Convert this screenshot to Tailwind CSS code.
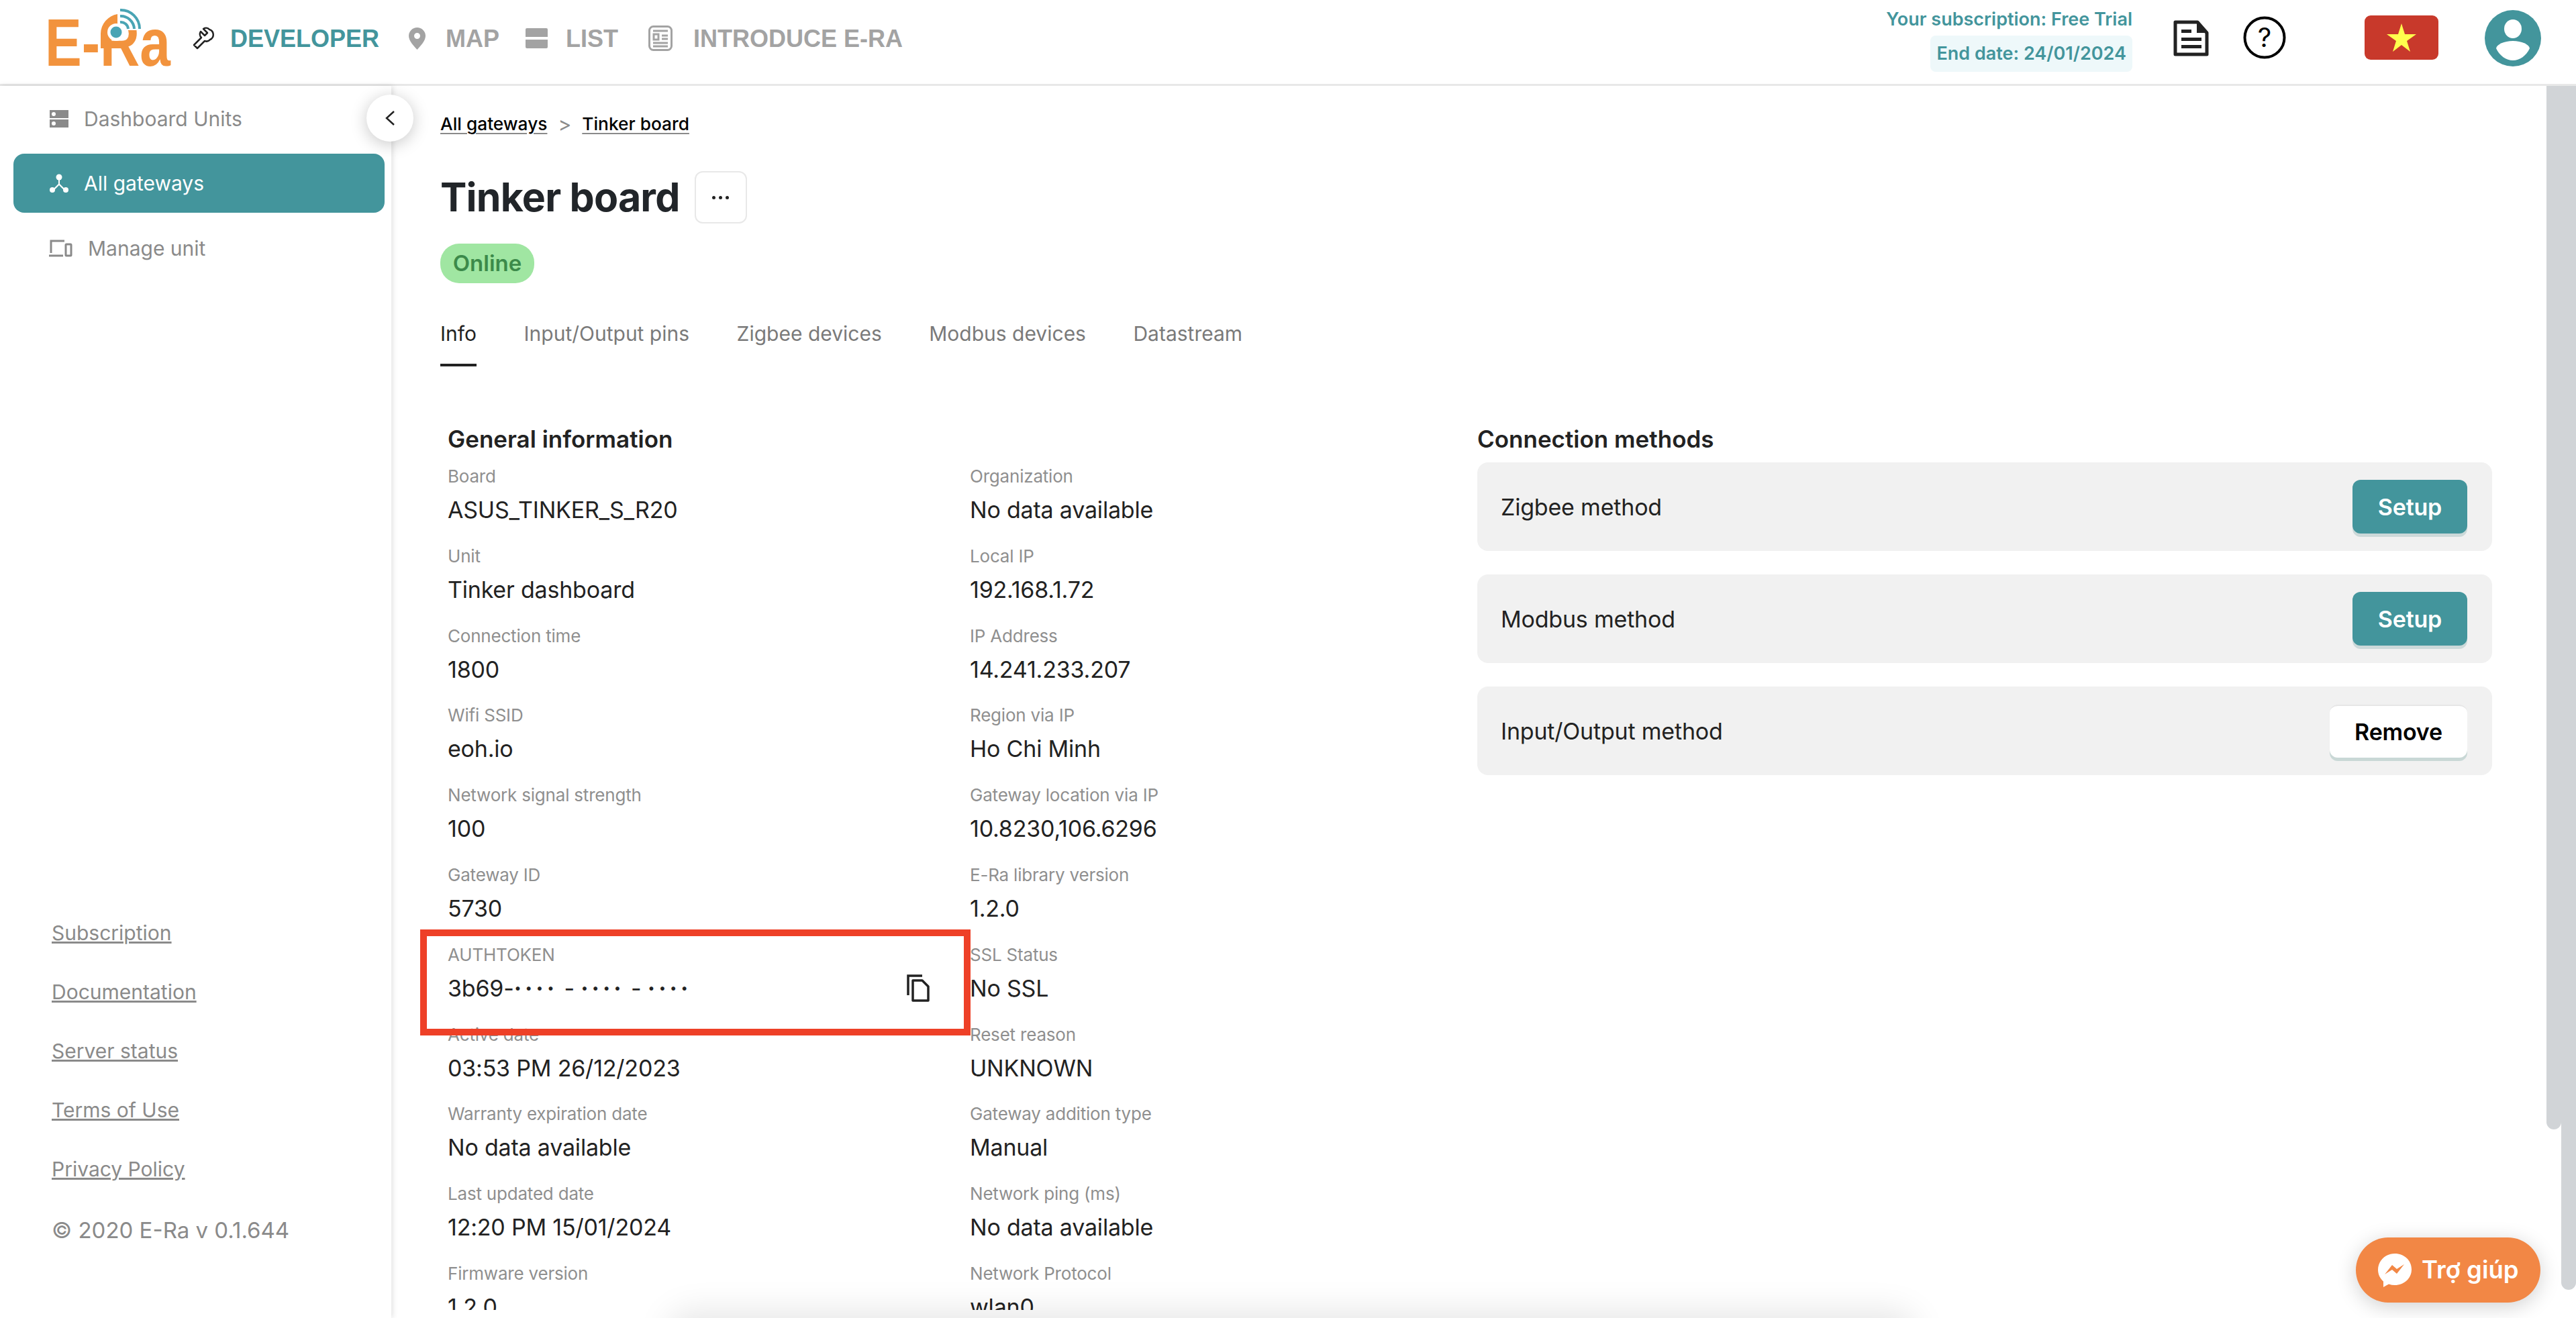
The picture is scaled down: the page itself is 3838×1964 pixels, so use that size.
<!DOCTYPE html>
<html lang="en">
<head>
  <meta charset="UTF-8">
  <title>E-Ra Tinker board</title>
  <script src="https://cdn.jsdelivr.net/npm/@tailwindcss/browser@4"></script>
</head>
<body class="w-[3838px] h-[1964px] overflow-hidden bg-white relative flex flex-col font-['Inter',sans-serif] text-[#222]">

  <!-- top bar -->
  <header class="h-[128px] shrink-0 border-b-[3px] border-[#e8e8e8] flex items-start">
    <svg class="w-[340px] h-[125px] shrink-0" viewBox="0 0 340 125">
      <text x="67" y="98" font-family="Liberation Sans" font-weight="700" font-size="100" fill="#f2933d" textLength="187" lengthAdjust="spacingAndGlyphs">E-Ra</text>
      <rect x="146" y="10" width="32" height="40" fill="#fff"/>
      <rect x="176" y="8" width="40" height="37" fill="#fff"/>
      <path d="M150 72V50A30 30 0 0 1 175 21V40H165V72Z" fill="#f2933d"/>
      <circle cx="173" cy="48" r="13" fill="#fff"/>
      <circle cx="173" cy="48" r="8.500" fill="#49a4b4"/>
      <g fill="none" stroke="#49a4b4" stroke-width="4">
        <path d="M179 15A28 28 0 0 1 208 43"/>
        <path d="M179 24A20 20 0 0 1 200 43"/>
        <path d="M179 33A11 11 0 0 1 191 43"/>
      </g>
      <path d="M314 46a7 7 0 0 0-9-1l6 6-4 4-6-6a7 7 0 0 0 1 9l-11 11 5 5 11-11a7 7 0 0 0 8-2 8 8 0 0 0-1-15z" transform="translate(-2 -2)" fill="none" stroke="#222" stroke-width="2.500" stroke-linejoin="round"/>
    </svg>
    <nav class="flex items-center h-[116px] font-['Liberation_Sans',sans-serif] font-bold text-[36px] text-[#a3a3a3]">
      <span class="text-[#43959c] ml-[3px]">DEVELOPER</span>
      <svg class="w-[25px] h-[33px] ml-[44px] mb-[2px]" viewBox="0 0 25 33"><path fill-rule="evenodd" d="M12.500 0A12.500 12.500 0 0 0 0 12.500C0 20 8 28 12.500 33 17 28 25 20 25 12.500A12.500 12.500 0 0 0 12.500 0ZM12.500 8a4.500 4.500 0 1 1 0 9 4.500 4.500 0 0 1 0-9Z" fill="#a3a3a3"/></svg>
      <span class="ml-[30px]">MAP</span>
      <span class="ml-[39px] w-[33px] h-[30px] flex flex-col justify-between mb-[3px]"><i class="block h-[13px] bg-[#a3a3a3] rounded-t-[2px]"></i><i class="block h-[13px] bg-[#a3a3a3] rounded-b-[2px]"></i></span>
      <span class="ml-[27px]">LIST</span>
      <svg class="w-[36px] h-[38px] ml-[45px] mb-[3px]" viewBox="0 0 36 38" fill="none" stroke="#a3a3a3" stroke-width="3"><rect x="1.500" y="1.500" width="33" height="35" rx="6"/><path d="M7 8h22M20 15h9M20 20h9M7 26h22M7 31h22"/><rect x="8" y="13" width="7" height="8"/></svg>
      <span class="ml-[31px]">INTRODUCE E-RA</span>
    </nav>
    <div class="ml-auto flex items-start">
      <div class="flex flex-col items-end w-[380px] text-[#43959c] font-semibold text-[27px] mr-[61px]">
        <span class="mt-[12px] leading-[34px]">Your subscription: Free Trial</span>
        <span class="mt-[7px] h-[54px] px-[9px] flex items-center rounded-[8px] bg-[#eef8fa]">End date: 24/01/2024</span>
      </div>
      <svg class="w-[53px] h-[54px] mt-[30px]" viewBox="0 0 53 54" fill="none"><path d="M3 3H36L50 19V51H3Z" stroke="#222" stroke-width="5" stroke-linejoin="round"/><path d="M35 3V19H50Z" fill="#222"/><path d="M12 14h15v5H12zM12 26h30v5H12zM12 37h30v5H12z" fill="#222"/></svg>
      <svg class="w-[64px] h-[64px] mt-[24px] ml-[51px]" viewBox="0 0 64 64"><circle cx="32" cy="32" r="29.500" fill="none" stroke="#000" stroke-width="4"/><text x="32" y="46" font-family="Inter" font-size="40" text-anchor="middle" fill="#000">?</text></svg>
      <div class="w-[110px] h-[66px] mt-[23px] ml-[117px] rounded-[9px] bg-[#c8392b] flex items-center justify-center">
        <svg class="w-[44px] h-[42px]" viewBox="0 0 44 42"><path d="M22 0L27 16H44L30 26 35 42 22 32 9 42 14 26 0 16H17Z" fill="#ffff4d"/></svg>
      </div>
      <svg class="w-[84px] h-[84px] mt-[15px] ml-[69px] mr-[52px] shrink-0" viewBox="0 0 84 84"><circle cx="42" cy="42" r="42" fill="#43959c"/><ellipse cx="42" cy="28" rx="13" ry="14" fill="#fff"/><path d="M42 46c13 0 24 5 25 11-5 11-15 18-25 18s-20-7-25-18c1-6 12-11 25-11z" fill="#fff"/></svg>
    </div>
  </header>

  <div class="flex-1 flex min-h-0">
    <!-- sidebar -->
    <aside class="relative w-[583px] shrink-0 flex flex-col shadow-[2px_0_8px_rgba(0,0,0,0.12)] text-[#8a8a8a] text-[30px] z-10">
      <button class="absolute left-[546px] top-[13px] w-[70px] h-[70px] rounded-full bg-white shadow-[0_4px_24px_rgba(0,0,0,0.22)] flex items-center justify-center">
        <svg class="w-[16px] h-[24px]" viewBox="0 0 16 24" fill="none" stroke="#222" stroke-width="2.500"><path d="M14 2L3 12l11 10"/></svg>
      </button>
      <div class="flex items-center h-[88px] mt-[5px] ml-[20px] mr-[10px] pl-[54px] gap-[23px]">
        <svg class="w-[28px] h-[26px]" viewBox="0 0 28 26"><path fill-rule="evenodd" d="M0 0h28v12H0ZM6 3a3 3 0 1 0 0 6 3 3 0 0 0 0-6ZM0 14h28v12H0Zm6 3a3 3 0 1 0 0 6 3 3 0 0 0 0-6Z" fill="#8a8a8a"/></svg>
        <span>Dashboard Units</span>
      </div>
      <div class="flex items-center h-[88px] mt-[8px] ml-[20px] mr-[10px] pl-[54px] gap-[23px] rounded-[16px] bg-[#43959c] text-white">
        <svg class="w-[28px] h-[28px]" viewBox="0 0 28 28" fill="#fff"><circle cx="14" cy="5" r="4.500"/><circle cx="4" cy="24" r="4"/><circle cx="24" cy="24" r="4"/><path d="M13 6h2v9l8 8-1.500 1.500L14 17l-7.500 7.500L5 23l8-8z"/></svg>
        <span>All gateways</span>
      </div>
      <div class="flex items-center h-[88px] mt-[9px] ml-[20px] mr-[10px] pl-[53px] gap-[23px]">
        <svg class="w-[35px] h-[26px]" viewBox="0 0 35 26" fill="none" stroke="#8a8a8a" stroke-width="3"><path d="M3 20V2h20M0 24h21"/><rect x="25" y="7" width="8" height="17" rx="1"/></svg>
        <span>Manage unit</span>
      </div>
      <div class="mt-auto ml-[77px] mb-[106px] flex flex-col">
        <a class="underline h-[88px] leading-[40px]">Subscription</a>
        <a class="underline h-[88px] leading-[40px]">Documentation</a>
        <a class="underline h-[88px] leading-[40px]">Server status</a>
        <a class="underline h-[88px] leading-[40px]">Terms of Use</a>
        <a class="underline h-[88px] leading-[40px]">Privacy Policy</a>
        <span class="text-[33px] leading-[50px] mt-[-2px]">© 2020 E-Ra v 0.1.644</span>
      </div>
    </aside>

    <!-- content -->
    <main class="relative flex-1 min-w-0 mb-[12px] overflow-hidden pl-[73px] pt-[39px]">
      <div class="flex items-center gap-[16px] h-[36px] text-[26.300px] font-medium text-black">
        <a class="underline decoration-[#8a8a8a] underline-offset-[4px]">All gateways</a>
        <span class="text-[#8a8a8a] font-normal text-[30px]">&gt;</span>
        <a class="underline decoration-[#8a8a8a] underline-offset-[4px]">Tinker board</a>
      </div>
      <div class="flex items-center mt-[52px] h-[78px]">
        <h1 class="text-[59px] font-bold text-[#212529] tracking-[-0.8px]">Tinker board</h1>
        <button class="ml-[22px] w-[78px] h-[78px] rounded-[12px] border-2 border-[#e8e8e8] flex items-center justify-center gap-[5px]">
          <i class="block w-[5px] h-[5px] rounded-full bg-[#222]"></i><i class="block w-[5px] h-[5px] rounded-full bg-[#222]"></i><i class="block w-[5px] h-[5px] rounded-full bg-[#222]"></i>
        </button>
      </div>
      <div class="mt-[30px] w-[140px] h-[59px] rounded-[28px] bg-[#a0e6a2] text-[#3c8a4a] font-semibold text-[33px] flex items-center justify-center">Online</div>

      <div class="mt-[55px] flex gap-[70.500px] text-[30px] text-[#7a7a7a]">
        <a class="h-[69px] leading-[40px] border-b-[4px] border-[#222] text-[#222]">Info</a>
        <a class="leading-[40px]">Input/Output pins</a>
        <a class="leading-[40px]">Zigbee devices</a>
        <a class="leading-[40px]">Modbus devices</a>
        <a class="leading-[40px]">Datastream</a>
      </div>

      <div class="mt-[88px] flex pl-[11px]">
        <section class="w-[1534px] shrink-0">
          <h2 class="text-[35px] leading-[40px] font-semibold">General information</h2>
          <div class="mt-[18px] grid grid-cols-[778px_1fr] auto-rows-[118.800px] tracking-[-0.2px]">
            <div><p class="text-[26px] leading-[36px] text-[#8f8f8f]">Board</p><p class="text-[34px] leading-[50px] mt-[7px]">ASUS_TINKER_S_R20</p></div>
            <div><p class="text-[26px] leading-[36px] text-[#8f8f8f]">Organization</p><p class="text-[34px] leading-[50px] mt-[7px]">No data available</p></div>
            <div><p class="text-[26px] leading-[36px] text-[#8f8f8f]">Unit</p><p class="text-[34px] leading-[50px] mt-[7px]">Tinker dashboard</p></div>
            <div><p class="text-[26px] leading-[36px] text-[#8f8f8f]">Local IP</p><p class="text-[34px] leading-[50px] mt-[7px]">192.168.1.72</p></div>
            <div><p class="text-[26px] leading-[36px] text-[#8f8f8f]">Connection time</p><p class="text-[34px] leading-[50px] mt-[7px]">1800</p></div>
            <div><p class="text-[26px] leading-[36px] text-[#8f8f8f]">IP Address</p><p class="text-[34px] leading-[50px] mt-[7px]">14.241.233.207</p></div>
            <div><p class="text-[26px] leading-[36px] text-[#8f8f8f]">Wifi SSID</p><p class="text-[34px] leading-[50px] mt-[7px]">eoh.io</p></div>
            <div><p class="text-[26px] leading-[36px] text-[#8f8f8f]">Region via IP</p><p class="text-[34px] leading-[50px] mt-[7px]">Ho Chi Minh</p></div>
            <div><p class="text-[26px] leading-[36px] text-[#8f8f8f]">Network signal strength</p><p class="text-[34px] leading-[50px] mt-[7px]">100</p></div>
            <div><p class="text-[26px] leading-[36px] text-[#8f8f8f]">Gateway location via IP</p><p class="text-[34px] leading-[50px] mt-[7px]">10.8230,106.6296</p></div>
            <div><p class="text-[26px] leading-[36px] text-[#8f8f8f]">Gateway ID</p><p class="text-[34px] leading-[50px] mt-[7px]">5730</p></div>
            <div><p class="text-[26px] leading-[36px] text-[#8f8f8f]">E-Ra library version</p><p class="text-[34px] leading-[50px] mt-[7px]">1.2.0</p></div>
            <div>
              <p class="text-[26px] leading-[36px] text-[#8f8f8f]">AUTHTOKEN</p>
              <div class="flex items-center mt-[7px] h-[50px]">
                <p class="text-[34px] leading-[50px]">3b69-<span class="font-bold tracking-[5px]">····</span> - <span class="font-bold tracking-[5px]">····</span> - <span class="font-bold tracking-[5px]">····</span></p>
                <svg class="w-[36px] h-[41px] ml-auto mr-[59px]" viewBox="0 0 36 41" fill="none" stroke="#222" stroke-width="3.500"><path d="M24 2H3V31"/><path d="M10 9H24L33 18V39H10Z" stroke-linejoin="round"/></svg>
              </div>
            </div>
            <div><p class="text-[26px] leading-[36px] text-[#8f8f8f]">SSL Status</p><p class="text-[34px] leading-[50px] mt-[7px]">No SSL</p></div>
            <div><p class="text-[26px] leading-[36px] text-[#8f8f8f]">Active date</p><p class="text-[34px] leading-[50px] mt-[7px]">03:53 PM 26/12/2023</p></div>
            <div><p class="text-[26px] leading-[36px] text-[#8f8f8f]">Reset reason</p><p class="text-[34px] leading-[50px] mt-[7px]">UNKNOWN</p></div>
            <div><p class="text-[26px] leading-[36px] text-[#8f8f8f]">Warranty expiration date</p><p class="text-[34px] leading-[50px] mt-[7px]">No data available</p></div>
            <div><p class="text-[26px] leading-[36px] text-[#8f8f8f]">Gateway addition type</p><p class="text-[34px] leading-[50px] mt-[7px]">Manual</p></div>
            <div><p class="text-[26px] leading-[36px] text-[#8f8f8f]">Last updated date</p><p class="text-[34px] leading-[50px] mt-[7px]">12:20 PM 15/01/2024</p></div>
            <div><p class="text-[26px] leading-[36px] text-[#8f8f8f]">Network ping (ms)</p><p class="text-[34px] leading-[50px] mt-[7px]">No data available</p></div>
            <div><p class="text-[26px] leading-[36px] text-[#8f8f8f]">Firmware version</p><p class="text-[34px] leading-[50px] mt-[7px]">1.2.0</p></div>
            <div><p class="text-[26px] leading-[36px] text-[#8f8f8f]">Network Protocol</p><p class="text-[34px] leading-[50px] mt-[7px]">wlan0</p></div>
          </div>
        </section>
        <section class="w-[1512px] shrink-0">
          <h2 class="text-[35px] leading-[40px] font-semibold">Connection methods</h2>
          <div class="mt-[15px] flex flex-col gap-[35px] tracking-[-0.2px]">
            <div class="h-[132px] rounded-[16px] bg-[#f1f1f1] flex items-center justify-between pl-[35px] pr-[37px] text-[34px]">
              <span>Zigbee method</span>
              <button class="w-[171px] h-[80px] rounded-[12px] bg-[#43959c] shadow-[0_5px_0_#ccd9d9] text-white font-semibold">Setup</button>
            </div>
            <div class="h-[132px] rounded-[16px] bg-[#f1f1f1] flex items-center justify-between pl-[35px] pr-[37px] text-[34px]">
              <span>Modbus method</span>
              <button class="w-[171px] h-[80px] rounded-[12px] bg-[#43959c] shadow-[0_5px_0_#ccd9d9] text-white font-semibold">Setup</button>
            </div>
            <div class="h-[132px] rounded-[16px] bg-[#f1f1f1] flex items-center justify-between pl-[35px] pr-[37px] text-[34px]">
              <span>Input/Output method</span>
              <button class="w-[205px] h-[79px] rounded-[12px] bg-white border-t-2 border-[#e6e6e6] shadow-[0_5px_0_#c9d8d6] text-black font-semibold">Remove</button>
            </div>
          </div>
        </section>
      </div>

      <!-- annotation over the token row -->
      <div class="absolute left-[43px] top-[1257px] w-[820px] h-[158px] border-[10px] border-[#ee4027]"></div>
    </main>

    <!-- the two scrollbars -->
    <div class="w-[22px] shrink-0"><div class="h-[1555px] bg-[#d1d4d7] rounded-b-[11px]"></div></div>
    <div class="w-[22px] shrink-0"><div class="h-[1794px] bg-[#d1d4d7] rounded-b-[11px]"></div></div>
  </div>

  <!-- help button and the soft shadow at the bottom edge -->
  <button class="absolute left-[3510px] top-[1844px] w-[275px] h-[97px] rounded-full bg-[#f28745] shadow-[0_6px_30px_rgba(0,0,0,0.18)] flex items-center pl-[33px] gap-[15px] text-white font-semibold text-[36.500px] z-20">
    <svg class="w-[50px] h-[50px]" viewBox="0 0 50 50"><path d="M25 0C11 0 0 10.500 0 24c0 7 3 13 8 17.500V50l8-4.500c3 1 6 1.500 9 1.500 14 0 25-10 25-23.500S39 0 25 0Z" fill="#fff"/><path d="M10 31l11-14 7 6 11-7-11 14-7-6z" fill="#f28745"/></svg>
    <span>Trợ giúp</span>
  </button>
  <div class="absolute left-[1010px] top-[1970px] w-[1830px] h-[40px] rounded-full shadow-[0_0_50px_16px_rgba(0,0,0,0.1)]"></div>
</body>
</html>
